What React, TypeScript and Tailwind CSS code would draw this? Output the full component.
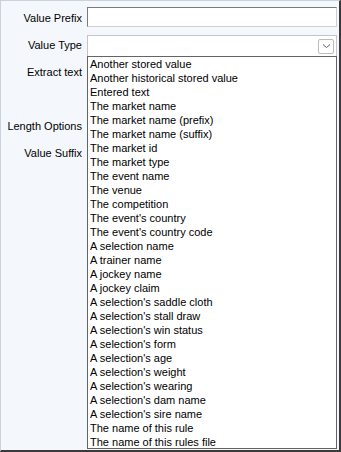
import React from "react";

const options = [
  "Another stored value",
  "Another historical stored value",
  "Entered text",
  "The market name",
  "The market name (prefix)",
  "The market name (suffix)",
  "The market id",
  "The market type",
  "The event name",
  "The venue",
  "The competition",
  "The event's country",
  "The event's country code",
  "A selection name",
  "A trainer name",
  "A jockey name",
  "A jockey claim",
  "A selection's saddle cloth",
  "A selection's stall draw",
  "A selection's win status",
  "A selection's form",
  "A selection's age",
  "A selection's weight",
  "A selection's wearing",
  "A selection's dam name",
  "A selection's sire name",
  "The name of this rule",
  "The name of this rules file",
];

export default function App() {
  return (
    <div className="w-[341px] h-[452px] flex bg-[#f4f8fc] border-t border-l border-[#c9d3dd] border-r-2 border-b-2 border-r-[#3a3a3a] border-b-[#3a3a3a] font-['Liberation_Sans',Arial,sans-serif] text-[11px] text-black overflow-hidden">
      {/* labels */}
      <div className="w-[81px] flex flex-col items-end text-right leading-[14px]">
        <span className="mt-[10px]">Value Prefix</span>
        <span className="mt-[13px]">Value Type</span>
        <span className="mt-[13px]">Extract text</span>
        <span className="mt-[40px]">Length Options</span>
        <span className="mt-[13px]">Value Suffix</span>
      </div>

      {/* fields */}
      <div className="ml-[5px] w-[250px] flex flex-col pt-[6px]">
        <div className="h-[20px] bg-white border border-t-[#7a7a7a] border-l-[#7a7a7a] border-r-[#d0d0d0] border-b-[#d0d0d0]" />
        <div className="mt-[8px] h-[21px] bg-white border border-[#c4c4c4] border-b-0 flex items-center justify-end pr-[2px]">
          <div className="w-[16px] h-[15px] border border-[#bcbcbc] rounded-[2px] bg-white flex items-center justify-center">
            <svg width="9" height="6" viewBox="0 0 9 6">
              <path d="M1 1.5 L4.5 4.5 L8 1.5" stroke="#606060" strokeWidth="1" fill="none" />
            </svg>
          </div>
        </div>
        <ul className="h-[393px] bg-white border border-[#646464] pl-[2px] pt-[0px] leading-[14px]">
          {options.map((o) => (
            <li key={o} className="whitespace-nowrap">{o}</li>
          ))}
        </ul>
      </div>
    </div>
  );
}
